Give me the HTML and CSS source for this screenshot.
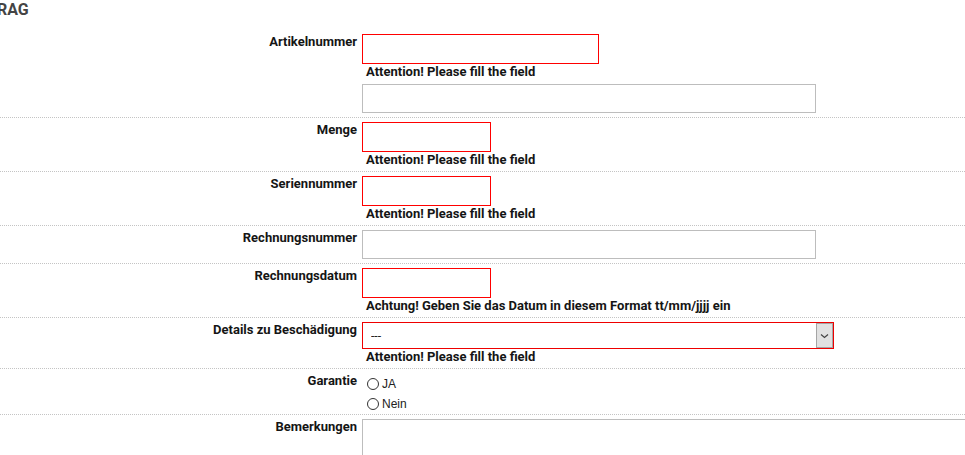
FILE: index.html
```html
<!DOCTYPE html>
<html lang="de">
<head>
<meta charset="utf-8">
<title>Anfrag</title>
<link rel="stylesheet" href="styles.css">
</head>
<body>
<h2 class="title">RAG</h2>
<form class="form">
  <div class="row">
    <label class="label">Artikelnummer</label>
    <div class="field">
      <input class="input input-md is-error" type="text">
      <div class="error">Attention! Please fill the field</div>
      <input class="input input-lg input-thin" type="text">
    </div>
  </div>
  <div class="row">
    <label class="label">Menge</label>
    <div class="field">
      <input class="input input-sm is-error" type="text">
      <div class="error">Attention! Please fill the field</div>
    </div>
  </div>
  <div class="row">
    <label class="label">Seriennummer</label>
    <div class="field">
      <input class="input input-sm is-error" type="text">
      <div class="error">Attention! Please fill the field</div>
    </div>
  </div>
  <div class="row">
    <label class="label">Rechnungsnummer</label>
    <div class="field">
      <input class="input input-lg input-thin" type="text">
    </div>
  </div>
  <div class="row">
    <label class="label">Rechnungsdatum</label>
    <div class="field">
      <input class="input input-sm is-error" type="text">
      <div class="error">Achtung! Geben Sie das Datum in diesem Format tt/mm/jjjj ein</div>
    </div>
  </div>
  <div class="row">
    <label class="label">Details zu Beschädigung</label>
    <div class="field">
      <div class="select-wrap">
        <select class="select is-error"><option>---</option></select>
        <span class="select-arrow"><svg width="9" height="6" viewBox="0 0 9 6"><path d="M1 1.5 L4.5 4.5 L8 1.5" fill="none" stroke="#444" stroke-width="1.2"/></svg></span>
      </div>
      <div class="error">Attention! Please fill the field</div>
    </div>
  </div>
  <div class="row row-radio">
    <label class="label">Garantie</label>
    <div class="field">
      <label class="radio"><input type="radio" name="garantie" class="radio-input">JA</label>
      <label class="radio"><input type="radio" name="garantie" class="radio-input">Nein</label>
    </div>
  </div>
  <div class="row row-last">
    <label class="label">Bemerkungen</label>
    <div class="field">
      <textarea class="textarea"></textarea>
    </div>
  </div>
</form>
</body>
</html>
```

FILE: styles.css
```css
html, body {
  margin: 0;
  padding: 0;
  background: #fff;
  overflow: hidden;
}
body {
  font-family: Roboto, "Liberation Sans", Arial, sans-serif;
  color: #222;
}
.title {
  margin: 0 0 10px -3px;
  font-size: 16px;
  line-height: 20px;
  font-weight: 700;
  color: #444;
}
.form {
  display: block;
}
.row {
  display: grid;
  grid-template-columns: 357px 1fr;
  column-gap: 5px;
  padding: 4px 0;
  border-bottom: 1px dotted #c4c4c4;
}
.row-radio {
  padding-bottom: 1px;
}
.row-last {
  border-bottom: none;
}
.label {
  text-align: right;
  font-size: 13px;
  line-height: 15px;
  font-weight: 700;
  color: #151515;
}
.field {
  display: flex;
  flex-direction: column;
  align-items: flex-start;
  min-width: 0;
}
.input {
  box-sizing: border-box;
  height: 30px;
  margin: 0;
  padding: 2px 6px;
  border: 1px solid #bdbdbd;
  background: #fff;
  font: 12px Roboto, sans-serif;
  outline: none;
}
.input-thin {
  height: 29px;
}
.input-sm { width: 129px; }
.input-md { width: 237px; }
.input-lg { width: 454px; }
.is-error {
  border-color: #f00;
}
.error {
  padding-left: 4px;
  font-size: 13px;
  line-height: 15px;
  font-weight: 700;
  color: #151515;
  margin-bottom: 5px;
}
.field > .error:last-child {
  margin-bottom: 0;
}
.select-wrap {
  position: relative;
  width: 472px;
  height: 27px;
}
.select {
  -webkit-appearance: none;
  appearance: none;
  box-sizing: border-box;
  width: 100%;
  height: 27px;
  margin: 0;
  padding: 0 0 0 8px;
  border: 1px solid #e00;
  border-radius: 0;
  background: #fff;
  font: 12px Roboto, sans-serif;
  color: #222;
  outline: none;
}
.select-arrow {
  position: absolute;
  top: 1px;
  right: 1px;
  bottom: 1px;
  width: 17px;
  box-sizing: border-box;
  border: 1px solid #a5a5a5;
  background: #e1e1e1;
  display: flex;
  align-items: center;
  justify-content: center;
}
.radio {
  display: flex;
  align-items: center;
  height: 20px;
  font-family: "Liberation Sans", Arial, sans-serif;
  font-size: 12px;
  color: #222;
  padding-top: 2px;
  box-sizing: border-box;
}
.radio-input {
  -webkit-appearance: none;
  appearance: none;
  box-sizing: border-box;
  width: 12px;
  height: 12px;
  margin: 0 3px 0 5px;
  border: 1px solid #333;
  border-radius: 50%;
  background: #fff;
}
.textarea {
  box-sizing: border-box;
  width: 720px;
  height: 80px;
  margin: 0;
  border: 1px solid #bdbdbd;
  border-radius: 0;
  resize: none;
  outline: none;
}
```
